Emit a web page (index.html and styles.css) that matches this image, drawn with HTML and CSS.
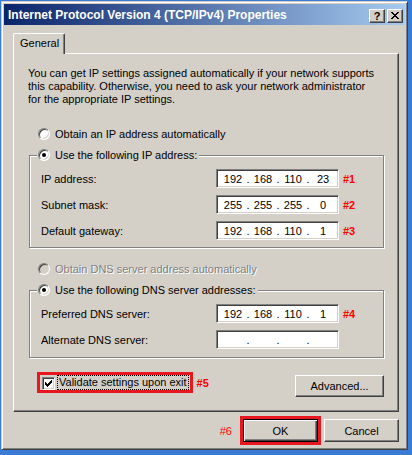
FILE: index.html
```html
<!DOCTYPE html>
<html>
<head>
<meta charset="utf-8">
<link rel="stylesheet" href="styles.css">
</head>
<body>
<div class="window">
  <div class="titlebar">
    <span class="title">Internet Protocol Version 4 (TCP/IPv4) Properties</span>
    <div class="caption-btns">
      <span class="cbtn help">?</span>
      <span class="cbtn close"><svg width="8" height="7" viewBox="0 0 8 7"><path d="M0 0h2v1h1v1h2V1h1V0h2v1H7v1H6v1H5v1h1v1h1v1h1v1H6V6H5V5H3v1H2v1H0V6h1V5h1V4h1V3H2V2H1V1H0z" fill="#000"/></svg></span>
    </div>
  </div>
  <div class="tabs"><div class="tab">General</div></div>
  <div class="panel">
    <p class="intro">You can get IP settings assigned automatically if your network supports<br>this capability. Otherwise, you need to ask your network administrator<br>for the appropriate IP settings.</p>
    <div class="opt"><span class="radio"></span><span>Obtain an IP address automatically</span></div>
    <div class="group">
      <div class="legend"><span class="radio on"><span class="dot"></span></span><span>Use the following IP address:</span></div>
      <div class="row"><span class="lbl">IP address:</span><div class="ipbox"><span class="seg">192</span><span class="sep">.</span><span class="seg">168</span><span class="sep">.</span><span class="seg">110</span><span class="sep">.</span><span class="seg">23</span></div><span class="mark">#1</span></div>
      <div class="row"><span class="lbl">Subnet mask:</span><div class="ipbox"><span class="seg">255</span><span class="sep">.</span><span class="seg">255</span><span class="sep">.</span><span class="seg">255</span><span class="sep">.</span><span class="seg">0</span></div><span class="mark">#2</span></div>
      <div class="row"><span class="lbl">Default gateway:</span><div class="ipbox"><span class="seg">192</span><span class="sep">.</span><span class="seg">168</span><span class="sep">.</span><span class="seg">110</span><span class="sep">.</span><span class="seg">1</span></div><span class="mark">#3</span></div>
    </div>
    <div class="opt disabled"><span class="radio off"></span><span>Obtain DNS server address automatically</span></div>
    <div class="group group2">
      <div class="legend"><span class="radio on"><span class="dot"></span></span><span>Use the following DNS server addresses:</span></div>
      <div class="row"><span class="lbl">Preferred DNS server:</span><div class="ipbox"><span class="seg">192</span><span class="sep">.</span><span class="seg">168</span><span class="sep">.</span><span class="seg">110</span><span class="sep">.</span><span class="seg">1</span></div><span class="mark">#4</span></div>
      <div class="row"><span class="lbl">Alternate DNS server:</span><div class="ipbox"><span class="seg"></span><span class="sep">.</span><span class="seg"></span><span class="sep">.</span><span class="seg"></span><span class="sep">.</span><span class="seg"></span></div></div>
    </div>
    <div class="bottom-row">
      <div class="validate">
        <div class="redbox check-wrap">
          <span class="checkbox"><svg width="7" height="7" viewBox="0 0 7 7"><path d="M0 2h1v1h1v1h1V3h1V2h1V1h1V0h1v3H6v1H5v1H4v1H3v1H2V6H1V5H0z" fill="#000"/></svg></span>
          <span class="focus">Validate settings upon exit</span>
        </div>
        <span class="mark">#5</span>
      </div>
      <button class="btn advanced">Advanced...</button>
    </div>
  </div>
  <div class="actions">
    <span class="mark mark6">#6</span>
    <div class="redbox"><button class="btn default">OK</button></div>
    <button class="btn cancel">Cancel</button>
  </div>
</div>
</body>
</html>
```
FILE: styles.css
```css
html, body {
  margin: 0;
  padding: 0;
}
body {
  background: #3a7bd5;
  padding: 1px 0 0 1px;
  height: 455px;
  box-sizing: border-box;
  overflow: hidden;
  font-family: "Liberation Sans", Arial, sans-serif;
  font-size: 11px;
  color: #000;
}
.window {
  width: 407px;
  box-sizing: border-box;
  background: #d4d0c8;
  border: 1px solid;
  border-color: #d4d0c8 #404040 #404040 #d4d0c8;
  box-shadow: inset 1px 1px 0 #fff, inset -1px -1px 0 #808080;
  padding: 2px 2px 4px 2px;
}
.titlebar {
  height: 21px;
  display: flex;
  align-items: center;
  justify-content: space-between;
  padding: 0 2px 0 4px;
  background: linear-gradient(to right, #0a246a, #a6caf0);
}
.title {
  color: #fff;
  font-weight: bold;
  font-size: 12px;
  white-space: nowrap;
}
.caption-btns {
  display: flex;
  gap: 2px;
  margin-top: 3px;
}
.cbtn {
  width: 16px;
  height: 14px;
  box-sizing: border-box;
  background: #d4d0c8;
  border: 1px solid;
  border-color: #fff #404040 #404040 #fff;
  box-shadow: inset -1px -1px 0 #808080;
  display: flex;
  align-items: center;
  justify-content: center;
  font-weight: bold;
  font-size: 11px;
  line-height: 1;
}
.cbtn svg { display: block; margin-left: -1px; margin-top: -1px; }
.tabs {
  margin-top: 8px;
  padding-left: 9px;
  display: flex;
}
.tab {
  position: relative;
  z-index: 1;
  width: 52px;
  height: 21px;
  box-sizing: border-box;
  margin-bottom: -1px;
  background: #d4d0c8;
  border-top: 1px solid #fff;
  border-left: 1px solid #fff;
  border-right: 1px solid #404040;
  border-radius: 2px 2px 0 0;
  box-shadow: inset -1px 0 0 #808080;
  padding: 3px 0 0 6px;
  line-height: 13px;
}
.panel {
  margin: 0 6px 0 9px;
  height: 359px;
  box-sizing: border-box;
  border: 1px solid;
  border-color: #fff #404040 #404040 #fff;
  box-shadow: inset -1px -1px 0 #808080;
  padding: 13px 14px 0 14px;
}
.intro {
  margin: 0;
  line-height: 13px;
  white-space: nowrap;
}
.opt {
  display: flex;
  align-items: center;
  gap: 5px;
  height: 16px;
  padding-left: 10px;
  margin-top: 20px;
}
.opt.disabled {
  margin-top: 13px;
  color: #808080;
  text-shadow: 1px 1px 0 #fff;
}
.radio {
  width: 12px;
  height: 12px;
  box-sizing: border-box;
  border-radius: 50%;
  background: #fff;
  border: 1px solid;
  border-color: #808080 #fff #fff #808080;
  box-shadow: inset 1px 1px 0 #404040, inset -1px -1px 0 #d4d0c8;
  display: flex;
  align-items: center;
  justify-content: center;
  flex: none;
}
.radio.off { background: #d4d0c8; }
.dot {
  width: 4px;
  height: 4px;
  border-radius: 50%;
  background: #000;
}
.group {
  margin: 13px 0 0 1px;
  border: 1px solid #808080;
  box-shadow: inset 1px 1px 0 #fff, 1px 1px 0 #fff;
  padding: 0 0 7px 0;
}
.group2 { padding-bottom: 8px; }
.legend {
  display: flex;
  align-items: center;
  gap: 5px;
  width: max-content;
  height: 16px;
  margin: -9px 0 0 7px;
  padding: 0 2px 0 1px;
  background: #d4d0c8;
}
.row {
  display: flex;
  align-items: center;
  height: 19px;
  margin-top: 7px;
  padding-left: 11px;
}
.legend + .row { margin-top: 6px; }
.lbl {
  width: 175px;
  flex: none;
}
.ipbox {
  width: 123px;
  height: 19px;
  box-sizing: border-box;
  flex: none;
  background: #fff;
  border: 1px solid;
  border-color: #808080 #fff #fff #808080;
  box-shadow: inset 1px 1px 0 #404040, inset -1px -1px 0 #d4d0c8;
  display: flex;
  align-items: center;
  padding-left: 3px;
}
.seg {
  width: 26px;
  text-align: center;
  flex: none;
}
.sep {
  width: 4px;
  flex: none;
  display: flex;
  justify-content: center;
}
.mark {
  color: #ff0000;
  font-weight: bold;
  font-size: 11px;
  margin-left: 4px;
}
.bottom-row {
  display: flex;
  justify-content: space-between;
  align-items: flex-start;
  margin-top: 14px;
}
.validate {
  display: flex;
  align-items: center;
  margin-left: 9px;
}
.redbox {
  border: 3px solid #e8161e;
  display: flex;
  align-items: center;
}
.check-wrap {
  height: 15px;
  padding: 0 1px 0 2px;
  gap: 2px;
}
.checkbox {
  width: 13px;
  height: 13px;
  box-sizing: border-box;
  background: #fff;
  border: 1px solid;
  border-color: #808080 #fff #fff #808080;
  box-shadow: inset 1px 1px 0 #404040, inset -1px -1px 0 #d4d0c8;
  display: flex;
  align-items: center;
  justify-content: center;
  margin-top: 2px;
}
.focus {
  border: 1px dotted #000;
  padding: 0 1px;
  line-height: 13px;
}
.btn {
  font-family: "Liberation Sans", Arial, sans-serif;
  font-size: 11px;
  color: #000;
  background: #d4d0c8;
  border: 1px solid;
  border-color: #fff #404040 #404040 #fff;
  box-shadow: inset -1px -1px 0 #808080;
  padding: 0;
  margin: 0;
  width: 75px;
  height: 23px;
}
.advanced {
  width: 89px;
  height: 22px;
  margin-top: 3px;
}
.actions {
  display: flex;
  justify-content: flex-end;
  align-items: center;
  margin-top: 4px;
  padding-right: 6px;
}
.mark6 { margin: 0 8px 0 0; font-weight: normal; }
.default {
  border: 1px solid #000;
  box-shadow: inset 1px 1px 0 #fff, inset -1px -1px 0 #404040, inset -2px -2px 0 #808080;
}
.cancel { margin-left: 3px; }
```
